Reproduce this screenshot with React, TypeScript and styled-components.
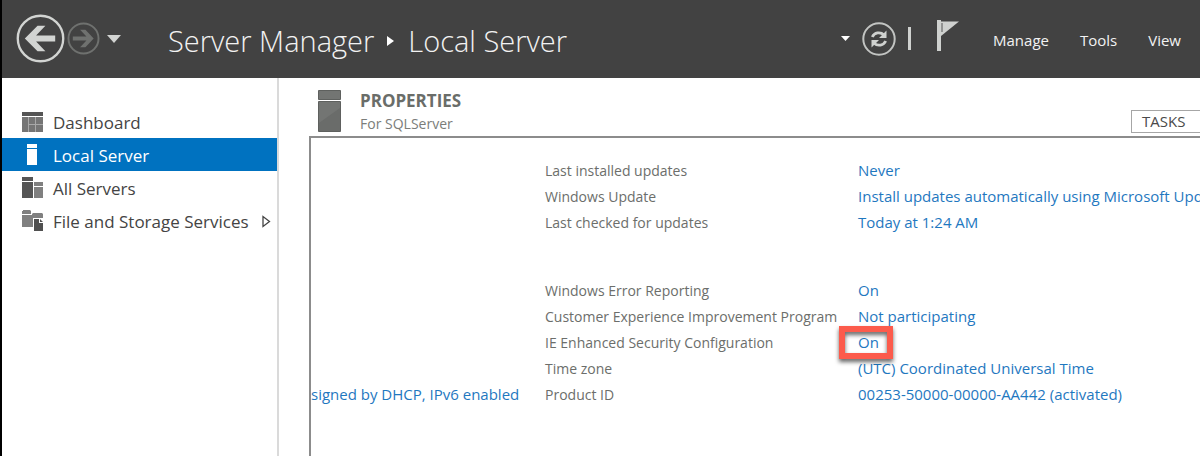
import React from "react";
import styled, { createGlobalStyle, css } from "styled-components";

const GlobalStyle = createGlobalStyle`
  *, *::before, *::after { box-sizing: border-box; }
  body {
    margin: 0;
    background: #fff;
    font-family: "Open Sans", "Noto Sans", sans-serif;
    overflow-x: hidden;
  }
  button { font: inherit; color: inherit; }
`;

const Window = styled.div`
  display: flex;
  flex-direction: column;
  min-height: 100vh;
  border-left: 2px solid #000;
  background: #fff;
`;

const Header = styled.header`
  display: flex;
  align-items: center;
  height: 78px;
  padding: 0 0 1px 14px;
  background: #424242;
  color: #f2f2f2;
  white-space: nowrap;
  overflow: hidden;
`;

const IconButton = styled.button`
  display: flex;
  flex: none;
  padding: 0;
  border: 0;
  background: none;
`;

const History = styled.nav`
  display: flex;
  align-items: center;
  gap: 2px;
  width: 152px;
  flex: none;
`;

const HistoryMenu = styled(IconButton)`
  margin-left: 5px;
`;

const Breadcrumb = styled.h1`
  display: flex;
  align-items: center;
  gap: 13px;
  margin: 0;
  padding-top: 4px;
  font-size: 29px;
  font-weight: 300;
  line-height: 40px;
`;

const Actions = styled.div`
  display: flex;
  align-items: center;
  margin-left: auto;
  padding-right: 19px;
`;

const StatusTools = styled.div`
  display: flex;
  align-items: center;
  gap: 12px;
  margin-right: 34px;
`;

const Divider = styled.span`
  width: 3px;
  height: 23px;
  background: #cfd1cf;
`;

const Flag = styled(IconButton)`
  margin: 0 0 6px 14px;
`;

const Menu = styled.nav`
  display: flex;
  gap: 31px;
`;

const MenuButton = styled.button`
  padding: 2px 0 0;
  border: 0;
  background: none;
  font-size: 15px;
  font-weight: 500;
  line-height: 24px;
`;

const Body = styled.div`
  display: flex;
  flex: 1;
`;

const Sidebar = styled.nav`
  flex: none;
  width: 277px;
  padding-top: 27px;
  border-right: 2px solid #dadada;
`;

const NavLink = styled.a<{ $selected?: boolean }>`
  display: flex;
  align-items: center;
  height: 33px;
  padding: 2px 0 0 20px;
  color: #444;
  font-size: 17px;
  text-decoration: none;
  white-space: nowrap;
  ${(p) =>
    p.$selected &&
    css`
      background: #0072c0;
      color: #fff;
    `}
`;

const NavIcon = styled.span`
  display: flex;
  margin: 0 10px 2px 0;
`;

const NavArrow = styled.span`
  display: flex;
  margin: 0 6px 0 auto;
`;

const Main = styled.main`
  display: flex;
  flex-direction: column;
  flex: 1;
  min-width: 0;
  padding-left: 30px;
`;

const PanelHeader = styled.div`
  display: flex;
  align-items: flex-end;
  height: 58px;
`;

const PanelIcon = styled.span`
  display: flex;
  margin: 0 19px 4px 9px;
`;

const PanelTitle = styled.h2`
  margin: 0;
  color: #6a6d69;
  font-size: 17px;
  font-weight: 700;
  line-height: 24px;
`;

const PanelSubtitle = styled.p`
  margin: 0 0 2px;
  color: #7b7d7a;
  font-size: 14px;
  line-height: 21px;
`;

const TasksButton = styled.button`
  width: 69px;
  height: 23px;
  margin: 0 0 3px auto;
  padding: 0 0 0 10px;
  border: 1px solid #a6a6a6;
  border-right: 0;
  background: #fff;
  color: #4a4a4a;
  font-size: 15px;
  line-height: 21px;
  text-align: left;
`;

const Panel = styled.section`
  flex: 1;
  border: solid #8c8c8c;
  border-width: 2px 0 0 2px;
  padding-top: 19px;
  overflow: hidden;
  white-space: nowrap;
  font-size: 15px;
  line-height: 26px;
`;

const Columns = styled.div`
  display: flex;
`;

const NetworkColumn = styled.div`
  flex: none;
  display: flex;
  align-items: flex-end;
  width: 234px;
`;

const ValueLink = styled.a`
  color: #1f78bf;
  text-decoration: none;
`;

const Groups = styled.div`
  display: flex;
  flex-direction: column;
  flex: 1;
  min-width: 0;
  gap: 42px;
`;

const Group = styled.dl`
  display: grid;
  grid-template-columns: 313px 1fr;
  grid-auto-rows: 26px;
  align-items: baseline;
  margin: 0;
`;

const Label = styled.dt`
  color: #6c6e6b;
  font-size: 14px;
`;

const Value = styled.dd`
  margin: 0;
`;

const Marked = styled.span`
  position: relative;
`;

const Marker = styled.span`
  position: absolute;
  inset: -6px -14px -7px -19px;
  border: 6px solid #fc5b4c;
  filter: drop-shadow(0 3px 2px rgba(0, 0, 0, 0.6));
  pointer-events: none;
`;

const BackIcon = () => (
  <svg width="49" height="49" viewBox="0 0 50 50" aria-hidden="true">
    <circle cx="25" cy="25" r="23.2" fill="none" stroke="#d2d4d2" strokeWidth="2.4" />
    <path d="M9 25 22 12h8L20.500 22H40v6H20.500L30 38h-8z" fill="#d2d4d2" />
  </svg>
);

const ForwardIcon = () => (
  <svg width="33" height="33" viewBox="0 0 34 34" aria-hidden="true">
    <circle cx="17" cy="17" r="15.500" fill="none" stroke="#6f716f" strokeWidth="2" />
    <path d="M27.500 17 19 26h-5.500l6.500-7H6v-4h14l-6.500-7H19z" fill="#6f716f" />
  </svg>
);

const DownTriangle = ({ width, height, color }: { width: number; height: number; color: string }) => (
  <svg width={width} height={height} viewBox="0 0 14 8" preserveAspectRatio="none" aria-hidden="true">
    <path d="M0 0h14L7 8z" fill={color} />
  </svg>
);

const CrumbArrow = () => (
  <svg width="8" height="10" viewBox="0 0 8 10" aria-hidden="true">
    <path d="M0 0v10l7-5z" fill="#fff" />
  </svg>
);

const RefreshIcon = () => (
  <svg width="34" height="34" viewBox="0 0 34 34" aria-hidden="true">
    <circle cx="17" cy="17" r="15.700" fill="none" stroke="#c2c4c2" strokeWidth="2" />
    <g fill="none" stroke="#cfd1cf" strokeWidth="2.8">
      <path d="M10.300 15c2-4.500 8-5.600 11.500-2.200" />
      <path d="M23.700 19c-2 4.500-8 5.600-11.500 2.200" />
    </g>
    <path d="M24.500 8.500v7.500h-7.500zM9.500 25.500v-7.500h7.500z" fill="#cfd1cf" />
  </svg>
);

const FlagIcon = () => (
  <svg width="22" height="31" viewBox="0 0 22 31" aria-hidden="true">
    <path d="M0 0h4v31H0z" fill="#cfd1cf" />
    <path d="M4 1.500h18L4 16z" fill="#cfd1cf" />
    <path d="M5 3v9" stroke="#555" strokeWidth="1" />
  </svg>
);

const DashboardIcon = () => (
  <svg width="21" height="20" viewBox="0 0 21 20" aria-hidden="true">
    <path d="M0 0h21v4H0z" fill="#555" />
    <path d="M0 5h21v15H0z" fill="#a8a8a8" />
    <path d="M0 5h6v15H0zM7 5h6v7H7zM14 5h7v7h-7zM7 13h6v7H7zM14 13h7v7h-7z" fill="#757575" />
  </svg>
);

const LocalServerIcon = () => (
  <svg width="21" height="21" viewBox="0 0 21 21" aria-hidden="true">
    <path d="M5 0h10v4H5zM5 5h10v16H5z" fill="#fff" />
  </svg>
);

const AllServersIcon = () => (
  <svg width="21" height="21" viewBox="0 0 21 21" aria-hidden="true">
    <path d="M0 0h11v4H0zM0 5h11v16H0z" fill="#555" />
    <path d="M12 5h9v4h-9zM12 10h9v11h-9z" fill="#808080" />
  </svg>
);

const StorageIcon = () => (
  <svg width="21" height="21" viewBox="0 0 21 21" aria-hidden="true">
    <path d="M0 1h1V0h7l1 1v3H0zM0 5h10V4l1-1h9l1 1v4h-10v9H0z" fill="#808080" />
    <path d="M12 9h5v4h4v8h-9zM18 9l3 3h-3z" fill="#505050" />
  </svg>
);

const ExpandIcon = () => (
  <svg width="9" height="13" viewBox="0 0 9 13" aria-hidden="true">
    <path d="M1 1.500v10l6.500-5z" fill="none" stroke="#444" strokeWidth="1.300" />
  </svg>
);

const ServerIcon = () => (
  <svg width="23" height="42" viewBox="0 0 23 42" aria-hidden="true">
    <path d="M.5.5h22v9H.5zM.5 11.500h22v30H.5z" fill="#737573" stroke="#5e605e" />
    <path d="M1 33 22 18v23H1z" fill="#6a6c6a" />
  </svg>
);

type Item = { label: string; value: string; marked?: boolean };

const groups: Item[][] = [
  [
    { label: "Last installed updates", value: "Never" },
    { label: "Windows Update", value: "Install updates automatically using Microsoft Update" },
    { label: "Last checked for updates", value: "Today at 1:24 AM" },
  ],
  [
    { label: "Windows Error Reporting", value: "On" },
    { label: "Customer Experience Improvement Program", value: "Not participating" },
    { label: "IE Enhanced Security Configuration", value: "On", marked: true },
    { label: "Time zone", value: "(UTC) Coordinated Universal Time" },
    { label: "Product ID", value: "00253-50000-00000-AA442 (activated)" },
  ],
];

const navItems = [
  { label: "Dashboard", icon: <DashboardIcon /> },
  { label: "Local Server", icon: <LocalServerIcon />, selected: true },
  { label: "All Servers", icon: <AllServersIcon /> },
  { label: "File and Storage Services", icon: <StorageIcon />, expandable: true },
];

export default function App() {
  return (
    <Window>
      <GlobalStyle />
      <Header>
        <History aria-label="History">
          <IconButton aria-label="Back"><BackIcon /></IconButton>
          <IconButton aria-label="Forward"><ForwardIcon /></IconButton>
          <HistoryMenu aria-label="Recent pages">
            <DownTriangle width={14} height={8} color="#d2d4d2" />
          </HistoryMenu>
        </History>
        <Breadcrumb>
          <span>Server Manager</span>
          <CrumbArrow />
          <span>Local Server</span>
        </Breadcrumb>
        <Actions>
          <StatusTools>
            <IconButton aria-label="Refresh options">
              <DownTriangle width={9} height={5} color="#fff" />
            </IconButton>
            <IconButton aria-label="Refresh"><RefreshIcon /></IconButton>
            <Divider />
            <Flag aria-label="Notifications"><FlagIcon /></Flag>
          </StatusTools>
          <Menu aria-label="Main menu">
            <MenuButton>Manage</MenuButton>
            <MenuButton>Tools</MenuButton>
            <MenuButton>View</MenuButton>
          </Menu>
        </Actions>
      </Header>
      <Body>
        <Sidebar aria-label="Servers">
          {navItems.map((item) => (
            <NavLink key={item.label} href="#" $selected={item.selected}>
              <NavIcon>{item.icon}</NavIcon>
              {item.label}
              {item.expandable && <NavArrow><ExpandIcon /></NavArrow>}
            </NavLink>
          ))}
        </Sidebar>
        <Main>
          <PanelHeader>
            <PanelIcon><ServerIcon /></PanelIcon>
            <div>
              <PanelTitle>PROPERTIES</PanelTitle>
              <PanelSubtitle>For SQLServer</PanelSubtitle>
            </div>
            <TasksButton>TASKS</TasksButton>
          </PanelHeader>
          <Panel>
            <Columns>
              <NetworkColumn>
                <ValueLink href="#">signed by DHCP, IPv6 enabled</ValueLink>
              </NetworkColumn>
              <Groups>
                {groups.map((items, i) => (
                  <Group key={i}>
                    {items.map((item) => (
                      <React.Fragment key={item.label}>
                        <Label>{item.label}</Label>
                        <Value>
                          {item.marked ? (
                            <Marked>
                              <ValueLink href="#">{item.value}</ValueLink>
                              <Marker />
                            </Marked>
                          ) : (
                            <ValueLink href="#">{item.value}</ValueLink>
                          )}
                        </Value>
                      </React.Fragment>
                    ))}
                  </Group>
                ))}
              </Groups>
            </Columns>
          </Panel>
        </Main>
      </Body>
    </Window>
  );
}
